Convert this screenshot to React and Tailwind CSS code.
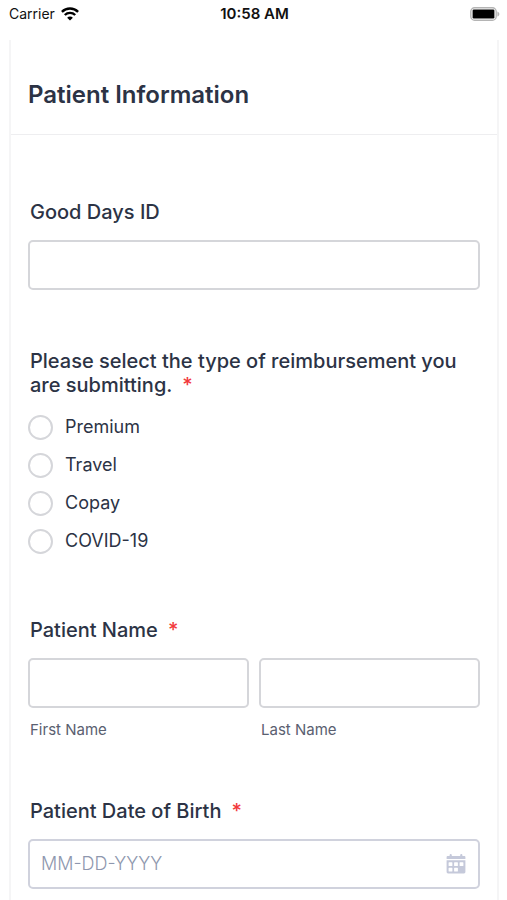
import { useState } from 'react';

const REIMBURSEMENT_TYPES = ['Premium', 'Travel', 'Copay', 'COVID-19'];

const inputClass =
  'block w-full h-[50px] px-3 rounded-[5px] border-2 border-[#d5d6da] bg-white text-lg text-[#2c3345] outline-none focus:border-blue-400';

// ── Icons ─────────────────────────────────────────────────────────────────────

function WifiIcon() {
  return (
    <svg className="w-[18px] h-[14px]" viewBox="0 0 18 14" fill="none" stroke="#000" strokeWidth="2.4">
      <path d="M0.9 4.8C5.4 0.4 12.6 0.4 17.1 4.8" />
      <path d="M3.8 8C6.7 5.2 11.3 5.2 14.2 8" />
      <path d="M9 13.6L6.1 10.8C7.7 9.2 10.3 9.2 11.9 10.8Z" fill="#000" stroke="none" />
    </svg>
  );
}

function BatteryIcon() {
  return (
    <svg className="w-[30px] h-[14px]" viewBox="0 0 30 14">
      <rect x="0.8" y="0.8" width="25.4" height="12.4" rx="3.8" fill="#fff" stroke="#b4b4b4" strokeWidth="1.4" />
      <rect x="2.6" y="2.6" width="21.8" height="8.8" rx="1.2" fill="#000" />
      <path d="M27.4 4.4C30 5.6 30 8.4 27.4 9.6Z" fill="#b4b4b4" />
    </svg>
  );
}

function CalendarIcon() {
  return (
    <svg className="w-5 h-5" viewBox="0 0 20 20" fill="#c5c9da">
      <path d="M1.6 2H3.6V1.2A1.1 1.1 0 0 1 5.8 1.2V2H14.2V1.2A1.1 1.1 0 0 1 16.4 1.2V2H18.4A1 1 0 0 1 19.4 3V5H0.6V3A1 1 0 0 1 1.6 2Z" />
      <path d="M0.6 6.2H19.4V18A1.4 1.4 0 0 1 18 19.4H2A1.4 1.4 0 0 1 0.6 18Z" />
      <g fill="#fff">
        <rect x="2.6" y="8.2" width="3.8" height="3.8" rx="0.6" />
        <rect x="8.1" y="8.2" width="3.8" height="3.8" rx="0.6" />
        <rect x="13.6" y="8.2" width="3.8" height="3.8" rx="0.6" />
        <rect x="2.6" y="13.8" width="3.8" height="3.8" rx="0.6" />
        <rect x="8.1" y="13.8" width="3.8" height="3.8" rx="0.6" />
      </g>
    </svg>
  );
}

// ── Form pieces ───────────────────────────────────────────────────────────────

function Required() {
  return <span className="ml-2.5 text-[#f23a3c]">*</span>;
}

function FieldTitle({ as: Tag = 'legend', required, children, ...rest }) {
  return (
    <Tag className="block px-0.5 mb-4 text-xl leading-6 font-medium text-[#2c3345]" {...rest}>
      {children}
      {required && <Required />}
    </Tag>
  );
}

function NamePart({ id, label }) {
  return (
    <div className="flex-1 min-w-0">
      <input id={id} type="text" className={inputClass} />
      <label htmlFor={id} className="block mt-3 px-0.5 text-[15px] leading-5 text-[#5a6070]">
        {label}
      </label>
    </div>
  );
}

// ── Page ──────────────────────────────────────────────────────────────────────

export default function App() {
  const [type, setType] = useState('');

  return (
    <div className="min-h-screen flex flex-col bg-white font-['Inter',sans-serif]">
      <header className="grid grid-cols-3 items-center h-7 pl-[9px] pr-[7px] text-[#111]">
        <div className="flex items-center gap-1.5 text-sm">
          Carrier
          <WifiIcon />
        </div>
        <div className="text-center text-[15px] font-semibold">10:58 AM</div>
        <div className="flex justify-end">
          <BatteryIcon />
        </div>
      </header>

      <main className="flex-1 ml-[9px] mr-2 mt-3 border-x-2 border-[#f5f5f6]">
        <div className="pl-[17px] pt-10 pb-6 border-b border-[#eeeef0]">
          <h1 className="text-2xl leading-[30px] font-semibold text-[#2c3345]">Patient Information</h1>
        </div>

        <form className="flex flex-col gap-[59px] px-[17px] pt-[65px] pb-14">
          <div>
            <FieldTitle as="label" htmlFor="good-days-id">Good Days ID</FieldTitle>
            <input id="good-days-id" type="text" className={inputClass} />
          </div>

          <fieldset>
            <FieldTitle required>Please select the type of reimbursement you are submitting.</FieldTitle>
            <div className="flex flex-col gap-3 pt-px pb-[5px]">
              {REIMBURSEMENT_TYPES.map((t) => (
                <label key={t} className="flex items-center gap-3 text-lg leading-[26px] text-[#2c3345]">
                  <input
                    type="radio"
                    name="reimbursement"
                    value={t}
                    checked={type === t}
                    onChange={() => setType(t)}
                    className="appearance-none shrink-0 size-[25px] rounded-full border-2 border-[#d5d6da] bg-white checked:border-8 checked:border-blue-500"
                  />
                  {t}
                </label>
              ))}
            </div>
          </fieldset>

          <fieldset>
            <FieldTitle required>Patient Name</FieldTitle>
            <div className="flex gap-[10px]">
              <NamePart id="first-name" label="First Name" />
              <NamePart id="last-name" label="Last Name" />
            </div>
          </fieldset>

          <div>
            <FieldTitle as="label" htmlFor="dob" required>Patient Date of Birth</FieldTitle>
            <div className="flex items-center h-[50px] pl-[11px] pr-3 rounded-[5px] border-2 border-[#d0d2dd] bg-white">
              <input
                id="dob"
                type="text"
                placeholder="MM-DD-YYYY"
                className="flex-1 min-w-0 text-lg font-light text-[#2c3345] placeholder:text-[#8e97ae] outline-none"
              />
              <button type="button" aria-label="Choose date">
                <CalendarIcon />
              </button>
            </div>
          </div>
        </form>
      </main>
    </div>
  );
}
